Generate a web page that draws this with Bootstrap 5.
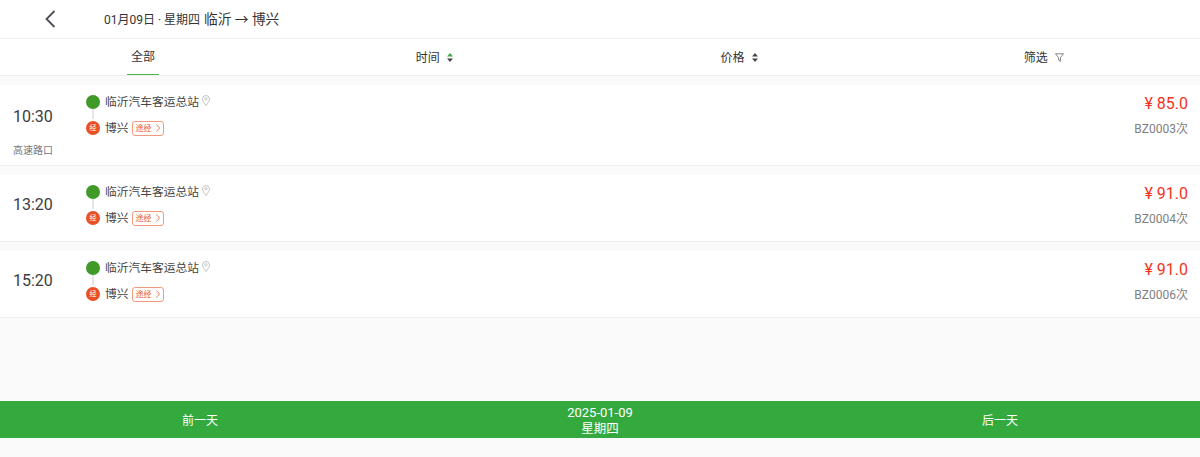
<!DOCTYPE html>
<html lang="zh-CN">
<head>
  <meta charset="UTF-8" />
  <meta name="viewport" content="width=device-width, initial-scale=1.0"/>
  <title>临沂 → 博兴</title>
  <link href="https://cdn.jsdelivr.net/npm/bootstrap@5.3.3/dist/css/bootstrap.min.css" rel="stylesheet"/>
  <style>
    html, body { height: 457px; overflow: hidden; }
    body {
      background: #fafafa;
      font-family: Roboto, "Noto Sans CJK SC", sans-serif;
      color: #333;
      font-size: 12px;
    }
    .top-bar { height: 39px; background: #fff; border-bottom: 1px solid #eee; }
    .back-btn { width: 104px; padding-left: 45px; }
    .top-date { font-size: 12px; padding-top: 1px; }
    .top-route { font-size: 13.7px; margin-left: 4px; padding-top: 1px; }
    .tab-bar { height: 37px; background: #fff; border-bottom: 1px solid #eee; }
    .tab-first { width: 286px; }
    .tab-item { flex: 1; padding-right: 8px; padding-top: 1px; gap: 7px; }
    .tab-active { height: 36px; width: 32px; padding-top: 1px; border-bottom: 1px solid #48b84c; }
    .bus-list { padding-top: 9px; }
    .bus-row { background: #fff; border-bottom: 1px solid #eee; margin-bottom: 9px; padding: 8px 12px 0 13px; }
    .row-tall { height: 81px; }
    .row-low { height: 67px; }
    .time-col { width: 73px; flex-shrink: 0; }
    .time-val { font-size: 16px; line-height: 22px; color: #3d3d3d; }
    .row-tall .time-val { margin-top: 13px; }
    .row-low .time-val { margin-top: 11px; }
    .time-note { font-size: 10px; color: #777; line-height: 14px; margin-top: 16px; }
    .stops { position: relative; margin-top: -4px; }
    .stop-line { position: absolute; left: 6px; top: 16px; width: 2px; height: 14px; background: #e6e6e6; }
    .stop-row { height: 26px; }
    .stop-row span { line-height: 18px; }
    .dot-start { width: 14px; height: 14px; border-radius: 50%; background: #3f9a28; margin-right: 5px; position: relative; }
    .dot-via { width: 14px; height: 14px; border-radius: 50%; background: #ea4f25; color: #fff; font-size: 7px; margin-right: 5px; position: relative; line-height: 14px; text-align: center; }
    .stop-name { font-size: 11.75px; color: #444; }
    .pin-icon { margin: 6px 0 0 3px; }
    .via-tag { margin-left: 3px; height: 15px; width: 32px; border: 1px solid #f29a80; border-radius: 3px; color: #ea5a30; font-size: 8px; padding-left: 3px; }
    .via-tag span { line-height: 13px; }
    .price { color: #f5331c; font-size: 16px; line-height: 22px; }
    .bus-no { color: #808080; font-size: 12px; line-height: 18px; margin-top: 5px; }
    .day-bar { height: 37px; background: #34aa3e; color: #fff; margin-bottom: 19px; padding-top: 2px; }
    .day-side { flex: 1; font-size: 12px; }
    .day-mid { width: 400px; line-height: 16px; font-size: 13px; }
    .day-week { font-size: 12.5px; }
  </style>
</head>
<body class="d-flex flex-column">

<!-- Header -->
<div class="top-bar d-flex align-items-center">
  <div class="back-btn">
    <svg class="d-block" width="11" height="18" viewBox="0 0 11 18"><path d="M9.500 1 1.500 9l8 8" fill="none" stroke="#4a4f57" stroke-width="1.800"/></svg>
  </div>
  <span class="top-date">01月09日 · 星期四</span>
  <span class="top-route">临沂 → 博兴</span>
</div>

<!-- Tabs -->
<div class="tab-bar d-flex align-items-center">
  <div class="tab-first d-flex justify-content-center">
    <div class="tab-active d-flex align-items-center justify-content-center">全部</div>
  </div>
  <div class="tab-item d-flex align-items-center justify-content-center">
    时间
    <svg width="6" height="9" viewBox="0 0 6 9"><path d="M3 0 6 3.500H0z" fill="#3aaa3e"/><path d="M3 9 0 5.500h6z" fill="#444"/></svg>
  </div>
  <div class="tab-item d-flex align-items-center justify-content-center">
    价格
    <svg width="6" height="9" viewBox="0 0 6 9"><path d="M3 0 6 3.500H0zM3 9 0 5.500h6z" fill="#444"/></svg>
  </div>
  <div class="tab-item d-flex align-items-center justify-content-center">
    筛选
    <svg width="9" height="9" viewBox="0 0 9 9"><path d="M.5.800h8L5.400 4.600v3.800L3.600 7V4.600z" fill="none" stroke="#666" stroke-width=".8"/></svg>
  </div>
</div>

<!-- Bus list -->
<div class="bus-list flex-grow-1" id="busList"></div>

<!-- Day switch -->
<div class="day-bar d-flex align-items-center text-center">
  <div class="day-side">前一天</div>
  <div class="day-mid">2025-01-09<div class="day-week">星期四</div></div>
  <div class="day-side">后一天</div>
</div>

<script>
const buses = [
  { time: '10:30', price: '85.0', no: 'BZ0003次', note: '高速路口' },
  { time: '13:20', price: '91.0', no: 'BZ0004次' },
  { time: '15:20', price: '91.0', no: 'BZ0006次' }
];
const list = document.getElementById('busList');
buses.forEach(b => {
  const row = document.createElement('div');
  row.className = 'bus-row d-flex ' + (b.note ? 'row-tall' : 'row-low');
  row.innerHTML = `
    <div class="time-col">
      <div class="time-val">${b.time}</div>
      ${b.note ? `<div class="time-note">${b.note}</div>` : ''}
    </div>
    <div class="stops flex-grow-1">
      <div class="stop-line"></div>
      <div class="stop-row d-flex align-items-center">
        <div class="dot-start"></div>
        <span class="stop-name">临沂汽车客运总站</span>
        <svg class="pin-icon align-self-start" width="8" height="11" viewBox="0 0 8 11"><path d="M4 10.500C2 7.500.5 6 .5 4a3.500 3.500 0 0 1 7 0C7.500 6 6 7.500 4 10.500z" fill="none" stroke="#aaa" stroke-width=".7"/><circle cx="4" cy="3.800" r="1.200" fill="none" stroke="#aaa" stroke-width=".6"/></svg>
      </div>
      <div class="stop-row d-flex align-items-center">
        <div class="dot-via">经</div>
        <span class="stop-name">博兴</span>
        <div class="via-tag d-flex align-items-center gap-1">
          <span>途经</span>
          <svg width="4" height="8" viewBox="0 0 4 8"><path d="m.5.500 3 3.500-3 3.500" fill="none" stroke="#ea5a30" stroke-width=".8"/></svg>
        </div>
      </div>
    </div>
    <div class="text-end">
      <div class="price">¥ ${b.price}</div>
      <div class="bus-no">${b.no}</div>
    </div>`;
  list.appendChild(row);
});
</script>

<script src="https://cdn.jsdelivr.net/npm/bootstrap@5.3.3/dist/js/bootstrap.bundle.min.js"></script>
</body>
</html>
